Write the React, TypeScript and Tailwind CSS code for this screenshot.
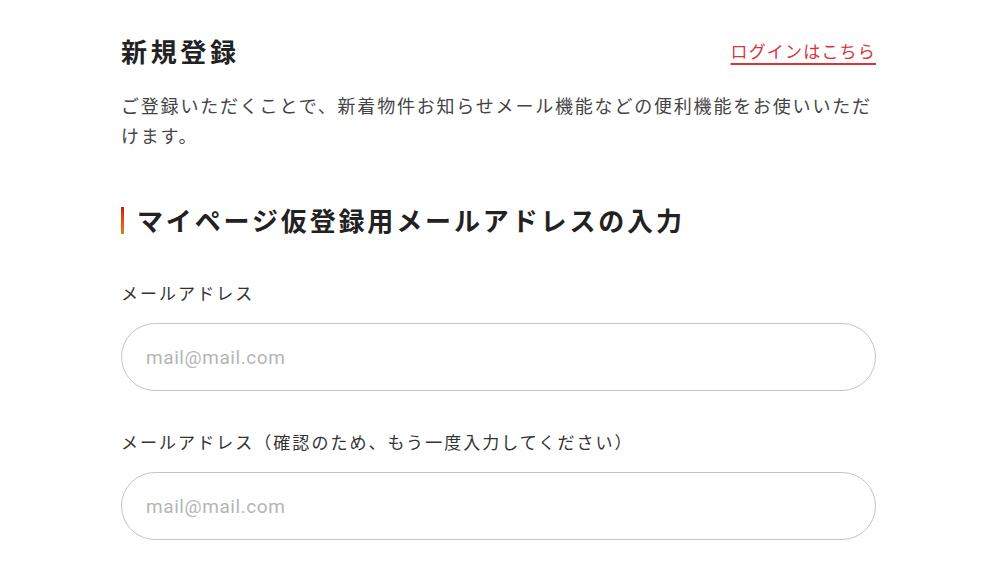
import React from 'react';

const jp = "font-['Noto_Sans_CJK_JP','Noto_Sans',sans-serif]";

function EmailField({ label }: { label: string }) {
    return (
        <>
            <label className="block text-[17px] leading-[24px] tracking-[0.12em] text-[#333]">
                {label}
            </label>
            <input
                type="email"
                placeholder="mail@mail.com"
                className="mt-[18px] block h-[68px] w-full rounded-full border border-[#c4c4c4] bg-white px-[24px] font-['Roboto',sans-serif] text-[19px] tracking-[0.03em] text-[#333] outline-none placeholder:text-[#b5b5b5]"
            />
        </>
    );
}

export default function App() {
    return (
        <div className={`min-h-screen bg-white ${jp}`}>
            <div className="ml-[121px] w-[755px] pt-[33px]">
                {/* Page header */}
                <div className="flex h-[36px] items-center justify-between">
                    <h1 className="text-[26px] font-bold leading-[36px] tracking-[0.14em] text-[#222]">
                        新規登録
                    </h1>
                    <a
                        href="#"
                        className="text-[17px] leading-[24px] tracking-[0.07em] text-[#d9343a] underline decoration-2 underline-offset-[5px]"
                    >
                        ログインはこちら
                    </a>
                </div>

                <p className="mt-[21px] text-[18px] leading-[30px] tracking-[0.1em] text-[#444]">
                    ご登録いただくことで、新着物件お知らせメール機能などの便利機能をお使いいただけます。
                </p>

                {/* Section heading */}
                <div className="mt-[52px] flex h-[36px] items-center">
                    <span className="mr-[13px] h-[27px] w-[3px] bg-gradient-to-b from-[#d10f0f] to-[#ea7a10]" />
                    <h2 className="text-[26px] font-bold leading-[36px] tracking-[0.11em] text-[#222]">
                        マイページ仮登録用メールアドレスの入力
                    </h2>
                </div>

                <div className="mt-[43px]">
                    <EmailField label="メールアドレス" />
                </div>
                <div className="mt-[39px]">
                    <EmailField label="メールアドレス（確認のため、もう一度入力してください）" />
                </div>
            </div>
        </div>
    );
}
